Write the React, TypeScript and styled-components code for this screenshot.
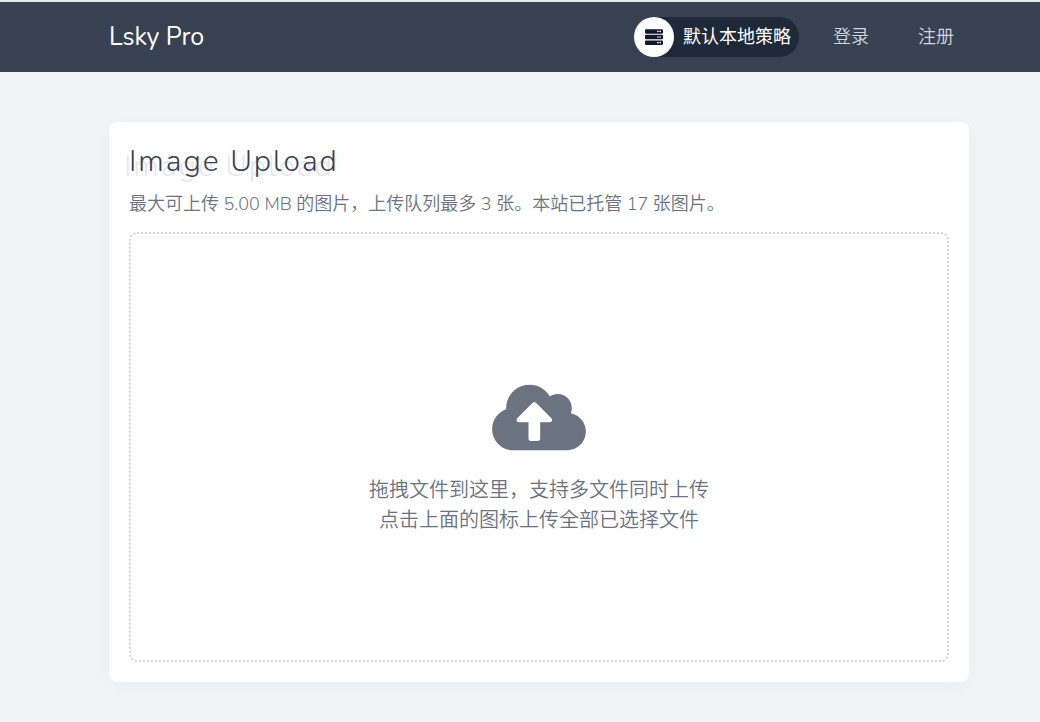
import React from "react";
import styled, { createGlobalStyle } from "styled-components";
import { FaCloudUploadAlt, FaServer } from "react-icons/fa";

const GlobalStyle = createGlobalStyle`
  *, *::before, *::after { box-sizing: border-box; }
  body {
    margin: 0;
    min-height: 100vh;
    background: #f3f4f6;
    color: #6b7280;
    font-family: Nunito, Lato, "Noto Sans CJK SC", sans-serif;
    font-size: 18px;
    line-height: 28px;
  }
`;

const Header = styled.header`
  display: flex;
  align-items: center;
  justify-content: space-between;
  height: 72px;
  padding: 0 86px 0 109px;
  border-top: 2px solid #e5eaee;
  background: #384152;
`;

const Brand = styled.a`
  color: #fff;
  font-size: 25px;
  text-decoration: none;
`;

const Nav = styled.nav`
  display: flex;
  align-items: center;
`;

const StrategyButton = styled.button`
  display: flex;
  align-items: center;
  gap: 9px;
  height: 40px;
  margin: 0 34px 0 0;
  padding: 0 8px 0 0;
  border: 0;
  border-radius: 20px;
  background: #1f2937;
  color: #fff;
  font: inherit;
  cursor: pointer;
`;

const StrategyIcon = styled.span`
  display: flex;
  align-items: center;
  justify-content: center;
  width: 40px;
  height: 40px;
  border-radius: 50%;
  background: #fff;
  color: #111827;
`;

const NavLink = styled.a`
  color: #d1d5db;
  font-weight: 350;
  text-decoration: none;

  & + & { margin-left: 49px; }
`;

const Main = styled.main`
  padding: 50px 71px 40px 109px;
`;

const Card = styled.section`
  padding: 20px;
  border-radius: 8px;
  background: #fff;
  box-shadow: 0 4px 18px rgba(0, 0, 0, 0.04);
`;

const Title = styled.h1`
  margin: 0 0 8px;
  color: #374151;
  font-size: 30px;
  font-weight: 300;
  line-height: 40px;
  letter-spacing: 2px;
  text-shadow: -5px 5px 0 #e5e7eb;
`;

const Summary = styled.p`
  margin: 0 0 14px;
  font-weight: 350;
`;

const DropZone = styled.div`
  display: flex;
  flex-direction: column;
  align-items: center;
  justify-content: center;
  min-height: 430px;
  padding-top: 21px;
  border: 2px dotted #d4d4d4;
  border-radius: 8px;
  font-size: 20px;
  font-weight: 350;
  line-height: 30px;
  text-align: center;
`;

const UploadButton = styled.button`
  display: block;
  margin: 0 0 21px;
  padding: 0;
  border: 0;
  background: none;
  color: #6b7280;
  cursor: pointer;

  svg { display: block; width: 94px; height: 75px; }
`;

const Hint = styled.p`
  margin: 0;
`;

export default function App() {
  return (
    <>
      <GlobalStyle />
      <Header>
        <Brand href="#">Lsky Pro</Brand>
        <Nav>
          <StrategyButton type="button">
            <StrategyIcon>
              <FaServer size={18} />
            </StrategyIcon>
            默认本地策略
          </StrategyButton>
          <NavLink href="#login">登录</NavLink>
          <NavLink href="#register">注册</NavLink>
        </Nav>
      </Header>
      <Main>
        <Card>
          <Title>Image Upload</Title>
          <Summary>
            最大可上传 5.00 MB 的图片，上传队列最多 3 张。本站已托管 17 张图片。
          </Summary>
          <DropZone>
            <UploadButton type="button" aria-label="上传">
              <FaCloudUploadAlt />
            </UploadButton>
            <Hint>拖拽文件到这里，支持多文件同时上传</Hint>
            <Hint>点击上面的图标上传全部已选择文件</Hint>
          </DropZone>
        </Card>
      </Main>
    </>
  );
}
